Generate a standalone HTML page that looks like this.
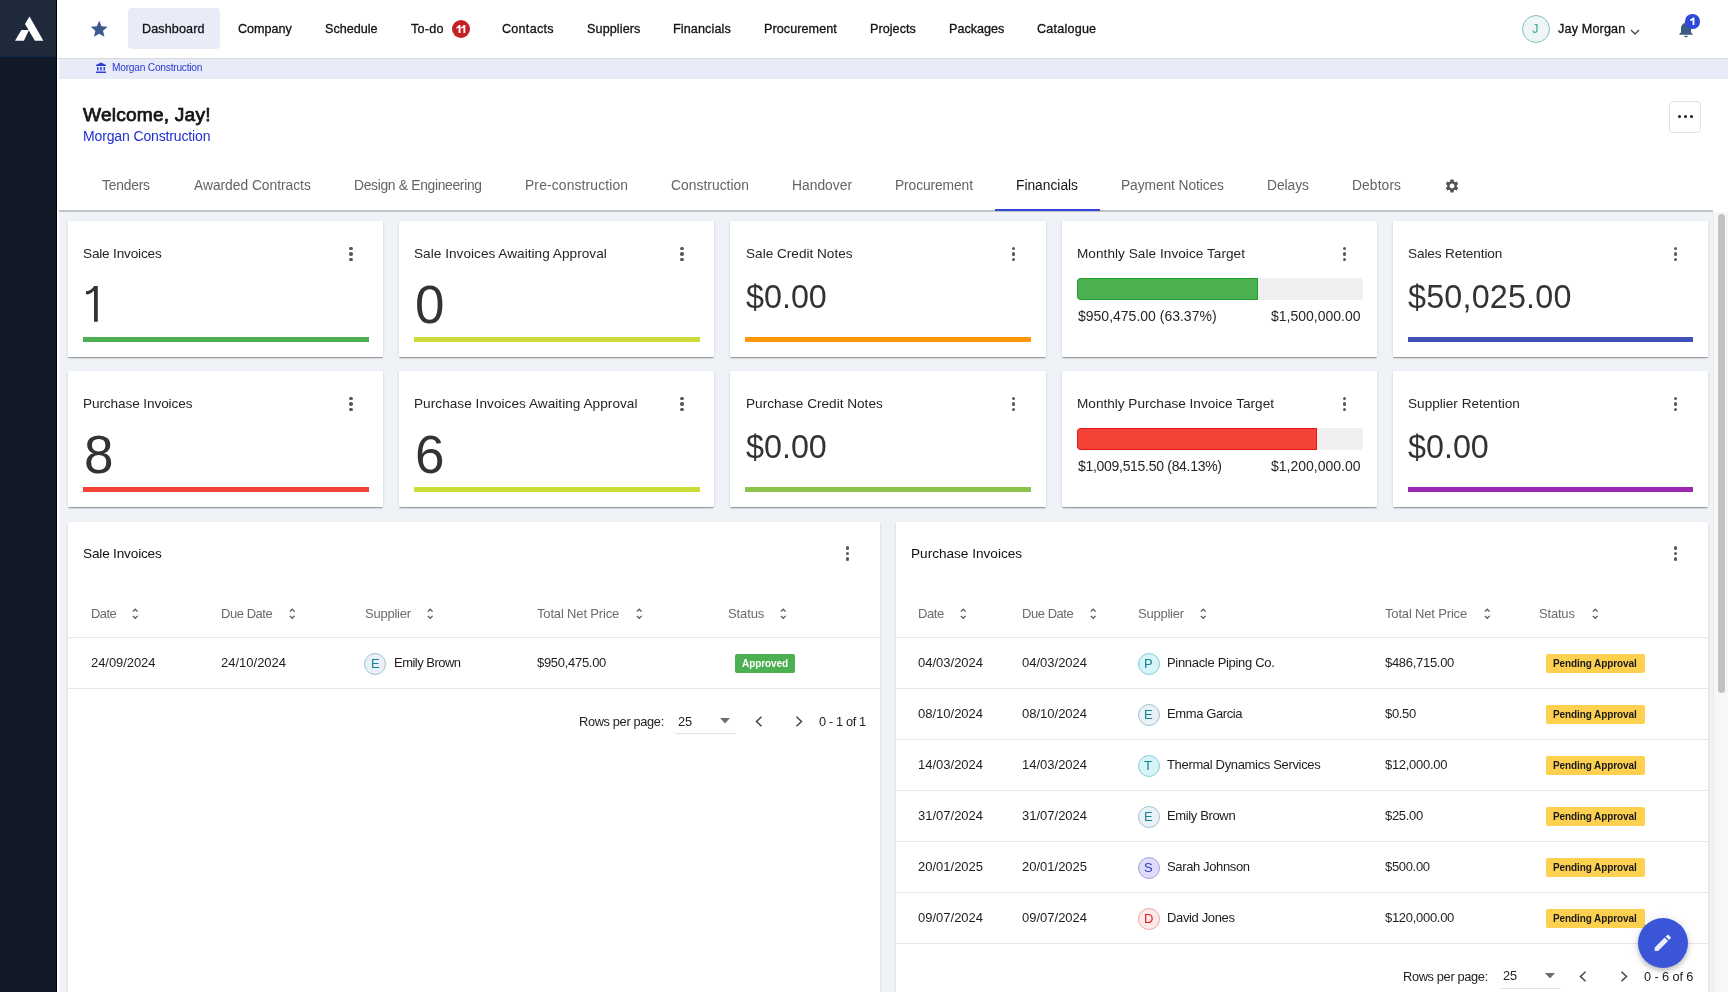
<!DOCTYPE html>
<html><head><meta charset="utf-8"><title>Dashboard</title>
<style>
html,body{margin:0;padding:0;}
.t{position:absolute;white-space:pre;will-change:transform;}
body{width:1728px;height:992px;overflow:hidden;position:relative;font-family:"Liberation Sans", sans-serif;background:#fff;}
</style></head><body>
<div style="position:absolute;left:57px;top:0px;width:1671px;height:992px;background:#ffffff;"></div>
<div style="position:absolute;left:59px;top:212px;width:1654px;height:780px;background:#eff2f6;"></div>
<div style="position:absolute;left:1713px;top:212px;width:15px;height:780px;background:#f7f7f7;border-left:1px solid #e8e8e8;box-sizing:border-box;"></div>
<div style="position:absolute;left:1717.5px;top:213.5px;width:7.5px;height:479.5px;background:#c1c1c1;border-radius:4px;"></div>
<div style="position:absolute;left:0px;top:0px;width:56px;height:992px;background:#111827;"></div>
<div style="position:absolute;left:0px;top:0px;width:56px;height:57px;background:#1f2a3b;"></div>
<div style="position:absolute;left:0px;top:56px;width:56px;height:1px;background:#0f2747;"></div>
<div style="position:absolute;left:56px;top:0px;width:1px;height:992px;background:#000000;"></div>
<svg style="position:absolute;left:0;top:0" width="56" height="57"><polygon fill="#fff" points="29.5,16.6 43.4,40.8 34.9,40.8 25.0,23.9"/><polygon fill="#fff" points="21.4,30.1 29.0,30.1 23.9,40.8 15.0,40.8"/></svg>
<div style="position:absolute;left:128px;top:8px;width:92px;height:41px;background:#e8ecf8;border-radius:4px;"></div>
<svg style="position:absolute;left:89.3px;top:18.8px" width="20.4" height="20.4" viewBox="0 0 24 24"><path fill="#3a5a8c" d="M12 17.27L18.18 21l-1.64-7.03L22 9.24l-7.19-.61L12 2 9.19 8.63 2 9.24l5.46 4.73L5.82 21z"/></svg>
<div style="position:absolute;left:451.5px;top:19.8px;width:18px;height:18px;border-radius:50%;background:#c62026"></div>
<svg style="position:absolute;left:451.5px;top:19.8px" width="18" height="18"><path fill="#fff" d="M6.6 5.0h1.9v8H6.6zM4.4 6.9C5.6 6.7 6.3 6.1 6.8 5.0L7.3 5.9 6.6 7.6C6.1 8.1 5.4 8.5 4.4 8.6zM11.4 5.0h1.9v8h-1.9zM9.2 6.9C10.4 6.7 11.1 6.1 11.6 5.0L12.1 5.9 11.4 7.6C10.9 8.1 10.2 8.5 9.2 8.6z"/></svg>
<div style="position:absolute;left:1522px;top:14.5px;width:28px;height:28px;border-radius:50%;background:#eef5f7;border:1px solid #7fc0c2;box-sizing:border-box"></div>
<svg style="position:absolute;left:1629.5px;top:28.5px" width="10" height="6" viewBox="0 0 10 6"><polyline points="1,1 5,5 9,1" fill="none" stroke="#3b4a63" stroke-width="1.3"/></svg>
<svg style="position:absolute;left:1676px;top:19px" width="20" height="20" viewBox="0 0 24 24"><path fill="#3d5a80" d="M12 22c1.1 0 2-.9 2-2h-4c0 1.1.89 2 2 2zm6-6v-5c0-3.07-1.64-5.64-4.5-6.32V4c0-.83-.67-1.5-1.5-1.5s-1.5.67-1.5 1.5v.68C7.63 5.36 6 7.92 6 11v5l-2 2v1h16v-1l-2-2z"/></svg>
<div style="position:absolute;left:1685.3px;top:14.2px;width:14.5px;height:14.5px;border-radius:50%;background:#2f49d8"></div>
<svg style="position:absolute;left:1685.3px;top:14.2px" width="14.5" height="14.5"><path fill="#fff" d="M7.6 3.4h1.8v7.6H7.6zM5.2 5.2C6.4 5.0 7.2 4.4 7.7 3.4L8.3 4.2 7.6 5.9C7 6.4 6.2 6.8 5.2 6.9z"/></svg>
<div style="position:absolute;left:59px;top:59px;width:1669px;height:20px;background:#e8ecf8;"></div>
<div style="position:absolute;left:57px;top:57.5px;width:1671px;height:1.5px;background:#d3d7de;"></div>
<svg style="position:absolute;left:95px;top:61.5px" width="12" height="12" viewBox="0 0 24 24"><path fill="#2b3fd8" d="M4 10h3v7H4zM10.5 10h3v7h-3zM2 19h20v3H2zM17 10h3v7h-3zM12 1 2 6v2h20V6z"/></svg>
<div style="position:absolute;left:1668.5px;top:101px;width:32px;height:32px;border:1px solid #dfe2e7;border-radius:4px;box-sizing:border-box;background:#fff"></div>
<div style="position:absolute;left:1677.9px;top:114.60000000000001px;width:3.2px;height:3.2px;border-radius:50%;background:#1b1b1f"></div>
<div style="position:absolute;left:1683.7px;top:114.60000000000001px;width:3.2px;height:3.2px;border-radius:50%;background:#1b1b1f"></div>
<div style="position:absolute;left:1689.5px;top:114.60000000000001px;width:3.2px;height:3.2px;border-radius:50%;background:#1b1b1f"></div>
<svg style="position:absolute;left:1444px;top:178.3px" width="16" height="16" viewBox="0 0 24 24"><path fill="#555" d="M19.14 12.94c.04-.3.06-.61.06-.94 0-.32-.02-.64-.07-.94l2.03-1.58c.18-.14.23-.41.12-.61l-1.92-3.32c-.12-.22-.37-.29-.59-.22l-2.39.96c-.5-.38-1.03-.7-1.62-.94l-.36-2.54c-.04-.24-.24-.41-.48-.41h-3.84c-.24 0-.43.17-.47.41l-.36 2.54c-.59.24-1.13.57-1.62.94l-2.39-.96c-.22-.08-.47 0-.59.22L2.74 8.87c-.12.21-.08.47.12.61l2.03 1.58c-.05.3-.09.63-.09.94s.02.64.07.94l-2.03 1.58c-.18.14-.23.41-.12.61l1.92 3.32c.12.22.37.29.59.22l2.39-.96c.5.38 1.03.7 1.62.94l.36 2.54c.05.24.24.41.48.41h3.84c.24 0 .44-.17.47-.41l.36-2.54c.59-.24 1.13-.56 1.62-.94l2.39.96c.22.08.47 0 .59-.22l1.92-3.32c.12-.22.07-.47-.12-.61l-2.01-1.58zM12 15.6c-1.98 0-3.6-1.62-3.6-3.6s1.62-3.6 3.6-3.6 3.6 1.62 3.6 3.6-1.62 3.6-3.6 3.6z"/></svg>
<div style="position:absolute;left:59px;top:210px;width:1654px;height:2px;background:#c0c3c7;"></div>
<div style="position:absolute;left:994.5px;top:209px;width:105.5px;height:2px;background:#3346d6;"></div>
<div style="position:absolute;left:68.0px;top:221px;width:315.2px;height:135.5px;background:#fff;border-radius:1px;box-shadow:0px 2px 1px -1px rgba(0,0,0,0.2),0px 1px 1px 0px rgba(0,0,0,0.14),0px 1px 3px 0px rgba(0,0,0,0.12)"></div>
<div style="position:absolute;left:349.09999999999997px;top:246.7px;width:3.6px;height:3.6px;border-radius:50%;background:#585858"></div>
<div style="position:absolute;left:349.09999999999997px;top:252.1px;width:3.6px;height:3.6px;border-radius:50%;background:#585858"></div>
<div style="position:absolute;left:349.09999999999997px;top:257.55px;width:3.6px;height:3.6px;border-radius:50%;background:#585858"></div>
<svg style="position:absolute;left:68.0px;top:221px" width="40" height="110"><path fill="#333" d="M26 65h3.8v35.8H26zM18 70.2C22 69.8 24.5 68 26 65L27.5 66.5 26 69.6C24.3 72 21.5 73.5 18 73.5z"/></svg>
<div style="position:absolute;left:83.0px;top:337px;width:285.5px;height:5px;background:#4caf50;"></div>
<div style="position:absolute;left:399.2px;top:221px;width:315.2px;height:135.5px;background:#fff;border-radius:1px;box-shadow:0px 2px 1px -1px rgba(0,0,0,0.2),0px 1px 1px 0px rgba(0,0,0,0.14),0px 1px 3px 0px rgba(0,0,0,0.12)"></div>
<div style="position:absolute;left:680.3px;top:246.7px;width:3.6px;height:3.6px;border-radius:50%;background:#585858"></div>
<div style="position:absolute;left:680.3px;top:252.1px;width:3.6px;height:3.6px;border-radius:50%;background:#585858"></div>
<div style="position:absolute;left:680.3px;top:257.55px;width:3.6px;height:3.6px;border-radius:50%;background:#585858"></div>
<div style="position:absolute;left:414.2px;top:337px;width:285.5px;height:5px;background:#cddc39;"></div>
<div style="position:absolute;left:730.4px;top:221px;width:315.2px;height:135.5px;background:#fff;border-radius:1px;box-shadow:0px 2px 1px -1px rgba(0,0,0,0.2),0px 1px 1px 0px rgba(0,0,0,0.14),0px 1px 3px 0px rgba(0,0,0,0.12)"></div>
<div style="position:absolute;left:1011.5px;top:246.7px;width:3.6px;height:3.6px;border-radius:50%;background:#585858"></div>
<div style="position:absolute;left:1011.5px;top:252.1px;width:3.6px;height:3.6px;border-radius:50%;background:#585858"></div>
<div style="position:absolute;left:1011.5px;top:257.55px;width:3.6px;height:3.6px;border-radius:50%;background:#585858"></div>
<div style="position:absolute;left:745.4px;top:337px;width:285.5px;height:5px;background:#ff9800;"></div>
<div style="position:absolute;left:1061.6px;top:221px;width:315.2px;height:135.5px;background:#fff;border-radius:1px;box-shadow:0px 2px 1px -1px rgba(0,0,0,0.2),0px 1px 1px 0px rgba(0,0,0,0.14),0px 1px 3px 0px rgba(0,0,0,0.12)"></div>
<div style="position:absolute;left:1342.7px;top:246.7px;width:3.6px;height:3.6px;border-radius:50%;background:#585858"></div>
<div style="position:absolute;left:1342.7px;top:252.1px;width:3.6px;height:3.6px;border-radius:50%;background:#585858"></div>
<div style="position:absolute;left:1342.7px;top:257.55px;width:3.6px;height:3.6px;border-radius:50%;background:#585858"></div>
<div style="position:absolute;left:1077.1px;top:278px;width:285.5px;height:22.4px;background:#f0f0f0;border-radius:4px;overflow:hidden"><div style="width:180.92135000000002px;height:22.4px;background:#4caf50;box-shadow:inset 0 0 0 1px #20a030;border-radius:4px 0 0 4px"></div></div>
<div style="position:absolute;left:1392.8px;top:221px;width:315.2px;height:135.5px;background:#fff;border-radius:1px;box-shadow:0px 2px 1px -1px rgba(0,0,0,0.2),0px 1px 1px 0px rgba(0,0,0,0.14),0px 1px 3px 0px rgba(0,0,0,0.12)"></div>
<div style="position:absolute;left:1673.8999999999999px;top:246.7px;width:3.6px;height:3.6px;border-radius:50%;background:#585858"></div>
<div style="position:absolute;left:1673.8999999999999px;top:252.1px;width:3.6px;height:3.6px;border-radius:50%;background:#585858"></div>
<div style="position:absolute;left:1673.8999999999999px;top:257.55px;width:3.6px;height:3.6px;border-radius:50%;background:#585858"></div>
<div style="position:absolute;left:1407.8px;top:337px;width:285.5px;height:5px;background:#3f51b5;"></div>
<div style="position:absolute;left:68.0px;top:371px;width:315.2px;height:135.5px;background:#fff;border-radius:1px;box-shadow:0px 2px 1px -1px rgba(0,0,0,0.2),0px 1px 1px 0px rgba(0,0,0,0.14),0px 1px 3px 0px rgba(0,0,0,0.12)"></div>
<div style="position:absolute;left:349.09999999999997px;top:396.7px;width:3.6px;height:3.6px;border-radius:50%;background:#585858"></div>
<div style="position:absolute;left:349.09999999999997px;top:402.09999999999997px;width:3.6px;height:3.6px;border-radius:50%;background:#585858"></div>
<div style="position:absolute;left:349.09999999999997px;top:407.55px;width:3.6px;height:3.6px;border-radius:50%;background:#585858"></div>
<div style="position:absolute;left:83.0px;top:487px;width:285.5px;height:5px;background:#f44336;"></div>
<div style="position:absolute;left:399.2px;top:371px;width:315.2px;height:135.5px;background:#fff;border-radius:1px;box-shadow:0px 2px 1px -1px rgba(0,0,0,0.2),0px 1px 1px 0px rgba(0,0,0,0.14),0px 1px 3px 0px rgba(0,0,0,0.12)"></div>
<div style="position:absolute;left:680.3px;top:396.7px;width:3.6px;height:3.6px;border-radius:50%;background:#585858"></div>
<div style="position:absolute;left:680.3px;top:402.09999999999997px;width:3.6px;height:3.6px;border-radius:50%;background:#585858"></div>
<div style="position:absolute;left:680.3px;top:407.55px;width:3.6px;height:3.6px;border-radius:50%;background:#585858"></div>
<div style="position:absolute;left:414.2px;top:487px;width:285.5px;height:5px;background:#cddc39;"></div>
<div style="position:absolute;left:730.4px;top:371px;width:315.2px;height:135.5px;background:#fff;border-radius:1px;box-shadow:0px 2px 1px -1px rgba(0,0,0,0.2),0px 1px 1px 0px rgba(0,0,0,0.14),0px 1px 3px 0px rgba(0,0,0,0.12)"></div>
<div style="position:absolute;left:1011.5px;top:396.7px;width:3.6px;height:3.6px;border-radius:50%;background:#585858"></div>
<div style="position:absolute;left:1011.5px;top:402.09999999999997px;width:3.6px;height:3.6px;border-radius:50%;background:#585858"></div>
<div style="position:absolute;left:1011.5px;top:407.55px;width:3.6px;height:3.6px;border-radius:50%;background:#585858"></div>
<div style="position:absolute;left:745.4px;top:487px;width:285.5px;height:5px;background:#8bc34a;"></div>
<div style="position:absolute;left:1061.6px;top:371px;width:315.2px;height:135.5px;background:#fff;border-radius:1px;box-shadow:0px 2px 1px -1px rgba(0,0,0,0.2),0px 1px 1px 0px rgba(0,0,0,0.14),0px 1px 3px 0px rgba(0,0,0,0.12)"></div>
<div style="position:absolute;left:1342.7px;top:396.7px;width:3.6px;height:3.6px;border-radius:50%;background:#585858"></div>
<div style="position:absolute;left:1342.7px;top:402.09999999999997px;width:3.6px;height:3.6px;border-radius:50%;background:#585858"></div>
<div style="position:absolute;left:1342.7px;top:407.55px;width:3.6px;height:3.6px;border-radius:50%;background:#585858"></div>
<div style="position:absolute;left:1077.1px;top:428px;width:285.5px;height:22.4px;background:#f0f0f0;border-radius:4px;overflow:hidden"><div style="width:240.19115000000002px;height:22.4px;background:#f44336;box-shadow:inset 0 0 0 1px #e8141c;border-radius:4px 0 0 4px"></div></div>
<div style="position:absolute;left:1392.8px;top:371px;width:315.2px;height:135.5px;background:#fff;border-radius:1px;box-shadow:0px 2px 1px -1px rgba(0,0,0,0.2),0px 1px 1px 0px rgba(0,0,0,0.14),0px 1px 3px 0px rgba(0,0,0,0.12)"></div>
<div style="position:absolute;left:1673.8999999999999px;top:396.7px;width:3.6px;height:3.6px;border-radius:50%;background:#585858"></div>
<div style="position:absolute;left:1673.8999999999999px;top:402.09999999999997px;width:3.6px;height:3.6px;border-radius:50%;background:#585858"></div>
<div style="position:absolute;left:1673.8999999999999px;top:407.55px;width:3.6px;height:3.6px;border-radius:50%;background:#585858"></div>
<div style="position:absolute;left:1407.8px;top:487px;width:285.5px;height:5px;background:#9c27b0;"></div>
<div style="position:absolute;left:68px;top:522px;width:812px;height:480px;background:#fff;border-radius:1px;box-shadow:0px 2px 1px -1px rgba(0,0,0,0.2),0px 1px 1px 0px rgba(0,0,0,0.14),0px 1px 3px 0px rgba(0,0,0,0.12)"></div>
<div style="position:absolute;left:896px;top:522px;width:812px;height:480px;background:#fff;border-radius:1px;box-shadow:0px 2px 1px -1px rgba(0,0,0,0.2),0px 1px 1px 0px rgba(0,0,0,0.14),0px 1px 3px 0px rgba(0,0,0,0.12)"></div>
<div style="position:absolute;left:845.7px;top:546.2px;width:3.6px;height:3.6px;border-radius:50%;background:#585858"></div>
<div style="position:absolute;left:845.7px;top:551.6px;width:3.6px;height:3.6px;border-radius:50%;background:#585858"></div>
<div style="position:absolute;left:845.7px;top:557.0500000000001px;width:3.6px;height:3.6px;border-radius:50%;background:#585858"></div>
<div style="position:absolute;left:1673.5px;top:546.2px;width:3.6px;height:3.6px;border-radius:50%;background:#585858"></div>
<div style="position:absolute;left:1673.5px;top:551.6px;width:3.6px;height:3.6px;border-radius:50%;background:#585858"></div>
<div style="position:absolute;left:1673.5px;top:557.0500000000001px;width:3.6px;height:3.6px;border-radius:50%;background:#585858"></div>
<svg style="position:absolute;left:132.3px;top:608.3px" width="7" height="11.5" viewBox="0 0 7 11.5"><polyline points="0.8,3.6 3.2,1.2 5.6,3.6" fill="none" stroke="#5a5a5a" stroke-width="1.3"/><polyline points="0.8,7.9 3.2,10.3 5.6,7.9" fill="none" stroke="#5a5a5a" stroke-width="1.3"/></svg>
<svg style="position:absolute;left:289.0px;top:608.3px" width="7" height="11.5" viewBox="0 0 7 11.5"><polyline points="0.8,3.6 3.2,1.2 5.6,3.6" fill="none" stroke="#5a5a5a" stroke-width="1.3"/><polyline points="0.8,7.9 3.2,10.3 5.6,7.9" fill="none" stroke="#5a5a5a" stroke-width="1.3"/></svg>
<svg style="position:absolute;left:426.5px;top:608.3px" width="7" height="11.5" viewBox="0 0 7 11.5"><polyline points="0.8,3.6 3.2,1.2 5.6,3.6" fill="none" stroke="#5a5a5a" stroke-width="1.3"/><polyline points="0.8,7.9 3.2,10.3 5.6,7.9" fill="none" stroke="#5a5a5a" stroke-width="1.3"/></svg>
<svg style="position:absolute;left:635.5px;top:608.3px" width="7" height="11.5" viewBox="0 0 7 11.5"><polyline points="0.8,3.6 3.2,1.2 5.6,3.6" fill="none" stroke="#5a5a5a" stroke-width="1.3"/><polyline points="0.8,7.9 3.2,10.3 5.6,7.9" fill="none" stroke="#5a5a5a" stroke-width="1.3"/></svg>
<svg style="position:absolute;left:779.8px;top:608.3px" width="7" height="11.5" viewBox="0 0 7 11.5"><polyline points="0.8,3.6 3.2,1.2 5.6,3.6" fill="none" stroke="#5a5a5a" stroke-width="1.3"/><polyline points="0.8,7.9 3.2,10.3 5.6,7.9" fill="none" stroke="#5a5a5a" stroke-width="1.3"/></svg>
<svg style="position:absolute;left:960.3px;top:608.3px" width="7" height="11.5" viewBox="0 0 7 11.5"><polyline points="0.8,3.6 3.2,1.2 5.6,3.6" fill="none" stroke="#5a5a5a" stroke-width="1.3"/><polyline points="0.8,7.9 3.2,10.3 5.6,7.9" fill="none" stroke="#5a5a5a" stroke-width="1.3"/></svg>
<svg style="position:absolute;left:1090.0px;top:608.3px" width="7" height="11.5" viewBox="0 0 7 11.5"><polyline points="0.8,3.6 3.2,1.2 5.6,3.6" fill="none" stroke="#5a5a5a" stroke-width="1.3"/><polyline points="0.8,7.9 3.2,10.3 5.6,7.9" fill="none" stroke="#5a5a5a" stroke-width="1.3"/></svg>
<svg style="position:absolute;left:1200.0px;top:608.3px" width="7" height="11.5" viewBox="0 0 7 11.5"><polyline points="0.8,3.6 3.2,1.2 5.6,3.6" fill="none" stroke="#5a5a5a" stroke-width="1.3"/><polyline points="0.8,7.9 3.2,10.3 5.6,7.9" fill="none" stroke="#5a5a5a" stroke-width="1.3"/></svg>
<svg style="position:absolute;left:1484.0px;top:608.3px" width="7" height="11.5" viewBox="0 0 7 11.5"><polyline points="0.8,3.6 3.2,1.2 5.6,3.6" fill="none" stroke="#5a5a5a" stroke-width="1.3"/><polyline points="0.8,7.9 3.2,10.3 5.6,7.9" fill="none" stroke="#5a5a5a" stroke-width="1.3"/></svg>
<svg style="position:absolute;left:1591.7px;top:608.3px" width="7" height="11.5" viewBox="0 0 7 11.5"><polyline points="0.8,3.6 3.2,1.2 5.6,3.6" fill="none" stroke="#5a5a5a" stroke-width="1.3"/><polyline points="0.8,7.9 3.2,10.3 5.6,7.9" fill="none" stroke="#5a5a5a" stroke-width="1.3"/></svg>
<div style="position:absolute;left:68px;top:637px;width:812px;height:1px;background:#e6e6e6;"></div>
<div style="position:absolute;left:896px;top:637px;width:812px;height:1px;background:#e6e6e6;"></div>
<div style="position:absolute;left:364.3px;top:652.5px;width:22px;height:22px;border-radius:50%;background:#eaf1f6;border:1px solid #9cc5d2;box-sizing:border-box"></div>
<div style="position:absolute;left:735px;top:654.0px;width:60px;height:19px;background:#4caf50;border-radius:2px"></div>
<div style="position:absolute;left:68px;top:688px;width:812px;height:1px;background:#e6e6e6;"></div>
<div style="position:absolute;left:1137.8px;top:652.5px;width:22px;height:22px;border-radius:50%;background:#d6f3f7;border:1px solid #88cfd8;box-sizing:border-box"></div>
<div style="position:absolute;left:1546px;top:654.2px;width:98.7px;height:18.6px;background:#fdd14f;border-radius:2px"></div>
<div style="position:absolute;left:896px;top:688px;width:812px;height:1px;background:#e6e6e6;"></div>
<div style="position:absolute;left:1137.8px;top:703.5px;width:22px;height:22px;border-radius:50%;background:#eaf1f6;border:1px solid #9cc5d2;box-sizing:border-box"></div>
<div style="position:absolute;left:1546px;top:705.2px;width:98.7px;height:18.6px;background:#fdd14f;border-radius:2px"></div>
<div style="position:absolute;left:896px;top:739px;width:812px;height:1px;background:#e6e6e6;"></div>
<div style="position:absolute;left:1137.8px;top:754.5px;width:22px;height:22px;border-radius:50%;background:#d6f3f7;border:1px solid #88cfd8;box-sizing:border-box"></div>
<div style="position:absolute;left:1546px;top:756.2px;width:98.7px;height:18.6px;background:#fdd14f;border-radius:2px"></div>
<div style="position:absolute;left:896px;top:790px;width:812px;height:1px;background:#e6e6e6;"></div>
<div style="position:absolute;left:1137.8px;top:805.5px;width:22px;height:22px;border-radius:50%;background:#eaf1f6;border:1px solid #9cc5d2;box-sizing:border-box"></div>
<div style="position:absolute;left:1546px;top:807.2px;width:98.7px;height:18.6px;background:#fdd14f;border-radius:2px"></div>
<div style="position:absolute;left:896px;top:841px;width:812px;height:1px;background:#e6e6e6;"></div>
<div style="position:absolute;left:1137.8px;top:856.5px;width:22px;height:22px;border-radius:50%;background:#dedcf8;border:1px solid #a5a2e4;box-sizing:border-box"></div>
<div style="position:absolute;left:1546px;top:858.2px;width:98.7px;height:18.6px;background:#fdd14f;border-radius:2px"></div>
<div style="position:absolute;left:896px;top:892px;width:812px;height:1px;background:#e6e6e6;"></div>
<div style="position:absolute;left:1137.8px;top:907.5px;width:22px;height:22px;border-radius:50%;background:#fbeaea;border:1px solid #f2a4a4;box-sizing:border-box"></div>
<div style="position:absolute;left:1546px;top:909.2px;width:98.7px;height:18.6px;background:#fdd14f;border-radius:2px"></div>
<div style="position:absolute;left:896px;top:943px;width:812px;height:1px;background:#e6e6e6;"></div>
<svg style="position:absolute;left:720.2px;top:718px" width="10" height="5.5" viewBox="0 0 10 5.5"><polygon points="0,0 10,0 5,5.5" fill="#6d6d6d"/></svg>
<div style="position:absolute;left:675.2px;top:733px;width:60.7px;height:1px;background:#e3e3e3;"></div>
<svg style="position:absolute;left:754.5px;top:716px" width="8" height="11" viewBox="0 0 8 11"><polyline points="6.5,0.8 1.5,5.5 6.5,10.2" fill="none" stroke="#444" stroke-width="1.5"/></svg>
<svg style="position:absolute;left:795.2px;top:716px" width="8" height="11" viewBox="0 0 8 11"><polyline points="1.5,0.8 6.5,5.5 1.5,10.2" fill="none" stroke="#444" stroke-width="1.5"/></svg>
<svg style="position:absolute;left:1545px;top:972.5px" width="10" height="5.5" viewBox="0 0 10 5.5"><polygon points="0,0 10,0 5,5.5" fill="#6d6d6d"/></svg>
<div style="position:absolute;left:1500.2px;top:987.5px;width:60.4px;height:1px;background:#e3e3e3;"></div>
<svg style="position:absolute;left:1579px;top:970.5px" width="8" height="11" viewBox="0 0 8 11"><polyline points="6.5,0.8 1.5,5.5 6.5,10.2" fill="none" stroke="#444" stroke-width="1.5"/></svg>
<svg style="position:absolute;left:1620.2px;top:970.5px" width="8" height="11" viewBox="0 0 8 11"><polyline points="1.5,0.8 6.5,5.5 1.5,10.2" fill="none" stroke="#444" stroke-width="1.5"/></svg>
<div class="t" style="left:142.30px;top:23.23px;font-size:12.6px;line-height:12.6px;font-weight:400;color:#121214;letter-spacing:0.109px;-webkit-text-stroke:0.3px #121214;">Dashboard</div>
<div class="t" style="left:238.10px;top:23.23px;font-size:12.6px;line-height:12.6px;font-weight:400;color:#121214;letter-spacing:-0.018px;-webkit-text-stroke:0.3px #121214;">Company</div>
<div class="t" style="left:325.20px;top:23.23px;font-size:12.6px;line-height:12.6px;font-weight:400;color:#121214;letter-spacing:-0.002px;-webkit-text-stroke:0.3px #121214;">Schedule</div>
<div class="t" style="left:411.00px;top:23.23px;font-size:12.6px;line-height:12.6px;font-weight:400;color:#121214;letter-spacing:0.246px;-webkit-text-stroke:0.3px #121214;">To-do</div>
<div class="t" style="left:502.20px;top:23.23px;font-size:12.6px;line-height:12.6px;font-weight:400;color:#121214;letter-spacing:0.257px;-webkit-text-stroke:0.3px #121214;">Contacts</div>
<div class="t" style="left:586.60px;top:23.23px;font-size:12.6px;line-height:12.6px;font-weight:400;color:#121214;letter-spacing:0.111px;-webkit-text-stroke:0.3px #121214;">Suppliers</div>
<div class="t" style="left:673.20px;top:23.23px;font-size:12.6px;line-height:12.6px;font-weight:400;color:#121214;letter-spacing:0.122px;-webkit-text-stroke:0.3px #121214;">Financials</div>
<div class="t" style="left:764.10px;top:23.23px;font-size:12.6px;line-height:12.6px;font-weight:400;color:#121214;letter-spacing:0.069px;-webkit-text-stroke:0.3px #121214;">Procurement</div>
<div class="t" style="left:869.90px;top:23.23px;font-size:12.6px;line-height:12.6px;font-weight:400;color:#121214;letter-spacing:0.057px;-webkit-text-stroke:0.3px #121214;">Projects</div>
<div class="t" style="left:949.00px;top:23.23px;font-size:12.6px;line-height:12.6px;font-weight:400;color:#121214;letter-spacing:-0.002px;-webkit-text-stroke:0.3px #121214;">Packages</div>
<div class="t" style="left:1037.10px;top:23.23px;font-size:12.6px;line-height:12.6px;font-weight:400;color:#121214;letter-spacing:0.210px;-webkit-text-stroke:0.3px #121214;">Catalogue</div>
<div class="t" style="left:1532.20px;top:22.20px;font-size:13px;line-height:13px;font-weight:400;color:#3aa88a;letter-spacing:0.000px;">J</div>
<div class="t" style="left:1557.90px;top:22.73px;font-size:12.6px;line-height:12.6px;font-weight:400;color:#121214;letter-spacing:0.165px;-webkit-text-stroke:0.3px #121214;">Jay Morgan</div>
<div class="t" style="left:111.70px;top:63.37px;font-size:10.2px;line-height:10.2px;font-weight:400;color:#2a3bcf;letter-spacing:-0.227px;">Morgan Construction</div>
<div class="t" style="left:83.30px;top:105.05px;font-size:19.2px;line-height:19.2px;font-weight:400;color:#141414;letter-spacing:0.169px;-webkit-text-stroke:0.75px #141414;">Welcome, Jay!</div>
<div class="t" style="left:83.30px;top:129.45px;font-size:14px;line-height:14px;font-weight:400;color:#1f2fcf;letter-spacing:-0.136px;">Morgan Construction</div>
<div class="t" style="left:101.50px;top:178.62px;font-size:13.8px;line-height:13.8px;font-weight:400;color:#646464;letter-spacing:-0.182px;">Tenders</div>
<div class="t" style="left:193.50px;top:178.62px;font-size:13.8px;line-height:13.8px;font-weight:400;color:#646464;letter-spacing:-0.017px;">Awarded Contracts</div>
<div class="t" style="left:354.00px;top:178.62px;font-size:13.8px;line-height:13.8px;font-weight:400;color:#646464;letter-spacing:-0.288px;">Design &amp; Engineering</div>
<div class="t" style="left:525.00px;top:178.62px;font-size:13.8px;line-height:13.8px;font-weight:400;color:#646464;letter-spacing:0.170px;">Pre-construction</div>
<div class="t" style="left:671.00px;top:178.62px;font-size:13.8px;line-height:13.8px;font-weight:400;color:#646464;letter-spacing:0.050px;">Construction</div>
<div class="t" style="left:792.00px;top:178.62px;font-size:13.8px;line-height:13.8px;font-weight:400;color:#646464;letter-spacing:0.025px;">Handover</div>
<div class="t" style="left:895.00px;top:178.62px;font-size:13.8px;line-height:13.8px;font-weight:400;color:#646464;letter-spacing:-0.098px;">Procurement</div>
<div class="t" style="left:1016.00px;top:178.62px;font-size:13.8px;line-height:13.8px;font-weight:400;color:#161616;letter-spacing:-0.014px;">Financials</div>
<div class="t" style="left:1121.00px;top:178.62px;font-size:13.8px;line-height:13.8px;font-weight:400;color:#646464;letter-spacing:-0.093px;">Payment Notices</div>
<div class="t" style="left:1267.00px;top:178.62px;font-size:13.8px;line-height:13.8px;font-weight:400;color:#646464;letter-spacing:-0.037px;">Delays</div>
<div class="t" style="left:1352.00px;top:178.62px;font-size:13.8px;line-height:13.8px;font-weight:400;color:#646464;letter-spacing:0.115px;">Debtors</div>
<div class="t" style="left:83.20px;top:247.29px;font-size:13.6px;line-height:13.6px;font-weight:400;color:#262626;letter-spacing:-0.176px;">Sale Invoices</div>
<div class="t" style="left:414.40px;top:247.29px;font-size:13.6px;line-height:13.6px;font-weight:400;color:#262626;letter-spacing:0.035px;">Sale Invoices Awaiting Approval</div>
<div class="t" style="left:414.70px;top:277.64px;font-size:53px;line-height:53px;font-weight:400;color:#333333;letter-spacing:0.000px;">0</div>
<div class="t" style="left:745.60px;top:247.29px;font-size:13.6px;line-height:13.6px;font-weight:400;color:#262626;letter-spacing:0.000px;">Sale Credit Notes</div>
<div class="t" style="left:745.90px;top:281.46px;font-size:32.3px;line-height:32.3px;font-weight:400;color:#333333;letter-spacing:0.000px;">$0.00</div>
<div class="t" style="left:1076.80px;top:247.29px;font-size:13.6px;line-height:13.6px;font-weight:400;color:#262626;letter-spacing:0.048px;">Monthly Sale Invoice Target</div>
<div class="t" style="left:1077.60px;top:308.55px;font-size:14px;line-height:14px;font-weight:400;color:#262626;letter-spacing:0.000px;">$950,475.00 (63.37%)</div>
<div class="t" style="left:1271.10px;top:308.55px;font-size:14px;line-height:14px;font-weight:400;color:#262626;letter-spacing:0.000px;">$1,500,000.00</div>
<div class="t" style="left:1408.00px;top:247.29px;font-size:13.6px;line-height:13.6px;font-weight:400;color:#262626;letter-spacing:-0.120px;">Sales Retention</div>
<div class="t" style="left:1408.30px;top:281.46px;font-size:32.3px;line-height:32.3px;font-weight:400;color:#333333;letter-spacing:0.194px;">$50,025.00</div>
<div class="t" style="left:83.20px;top:397.29px;font-size:13.6px;line-height:13.6px;font-weight:400;color:#262626;letter-spacing:-0.099px;">Purchase Invoices</div>
<div class="t" style="left:83.50px;top:427.64px;font-size:53px;line-height:53px;font-weight:400;color:#333333;letter-spacing:0.000px;">8</div>
<div class="t" style="left:414.40px;top:397.29px;font-size:13.6px;line-height:13.6px;font-weight:400;color:#262626;letter-spacing:0.046px;">Purchase Invoices Awaiting Approval</div>
<div class="t" style="left:414.70px;top:427.64px;font-size:53px;line-height:53px;font-weight:400;color:#333333;letter-spacing:0.000px;">6</div>
<div class="t" style="left:745.60px;top:397.29px;font-size:13.6px;line-height:13.6px;font-weight:400;color:#262626;letter-spacing:0.000px;">Purchase Credit Notes</div>
<div class="t" style="left:745.90px;top:431.46px;font-size:32.3px;line-height:32.3px;font-weight:400;color:#333333;letter-spacing:0.000px;">$0.00</div>
<div class="t" style="left:1076.80px;top:397.29px;font-size:13.6px;line-height:13.6px;font-weight:400;color:#262626;letter-spacing:0.000px;">Monthly Purchase Invoice Target</div>
<div class="t" style="left:1077.60px;top:458.55px;font-size:14px;line-height:14px;font-weight:400;color:#262626;letter-spacing:-0.297px;">$1,009,515.50 (84.13%)</div>
<div class="t" style="left:1271.10px;top:458.55px;font-size:14px;line-height:14px;font-weight:400;color:#262626;letter-spacing:0.000px;">$1,200,000.00</div>
<div class="t" style="left:1408.00px;top:397.29px;font-size:13.6px;line-height:13.6px;font-weight:400;color:#262626;letter-spacing:0.000px;">Supplier Retention</div>
<div class="t" style="left:1408.30px;top:431.46px;font-size:32.3px;line-height:32.3px;font-weight:400;color:#333333;letter-spacing:0.000px;">$0.00</div>
<div class="t" style="left:83.20px;top:547.29px;font-size:13.6px;line-height:13.6px;font-weight:400;color:#111;letter-spacing:-0.172px;">Sale Invoices</div>
<div class="t" style="left:911.00px;top:547.29px;font-size:13.6px;line-height:13.6px;font-weight:400;color:#111;letter-spacing:0.000px;">Purchase Invoices</div>
<div class="t" style="left:90.50px;top:607.30px;font-size:13px;line-height:13px;font-weight:400;color:#6b6b6b;letter-spacing:-0.573px;">Date</div>
<div class="t" style="left:221.30px;top:607.30px;font-size:13px;line-height:13px;font-weight:400;color:#6b6b6b;letter-spacing:-0.453px;">Due Date</div>
<div class="t" style="left:364.50px;top:607.30px;font-size:13px;line-height:13px;font-weight:400;color:#6b6b6b;letter-spacing:-0.243px;">Supplier</div>
<div class="t" style="left:537.00px;top:607.30px;font-size:13px;line-height:13px;font-weight:400;color:#6b6b6b;letter-spacing:-0.164px;">Total Net Price</div>
<div class="t" style="left:728.00px;top:607.30px;font-size:13px;line-height:13px;font-weight:400;color:#6b6b6b;letter-spacing:-0.122px;">Status</div>
<div class="t" style="left:918.00px;top:607.30px;font-size:13px;line-height:13px;font-weight:400;color:#6b6b6b;letter-spacing:-0.406px;">Date</div>
<div class="t" style="left:1022.30px;top:607.30px;font-size:13px;line-height:13px;font-weight:400;color:#6b6b6b;letter-spacing:-0.453px;">Due Date</div>
<div class="t" style="left:1138.00px;top:607.30px;font-size:13px;line-height:13px;font-weight:400;color:#6b6b6b;letter-spacing:-0.243px;">Supplier</div>
<div class="t" style="left:1385.40px;top:607.30px;font-size:13px;line-height:13px;font-weight:400;color:#6b6b6b;letter-spacing:-0.168px;">Total Net Price</div>
<div class="t" style="left:1539.30px;top:607.30px;font-size:13px;line-height:13px;font-weight:400;color:#6b6b6b;letter-spacing:-0.192px;">Status</div>
<div class="t" style="left:90.50px;top:656.20px;font-size:13px;line-height:13px;font-weight:400;color:#1e1e1e;letter-spacing:-0.064px;">24/09/2024</div>
<div class="t" style="left:221.30px;top:656.20px;font-size:13px;line-height:13px;font-weight:400;color:#1e1e1e;letter-spacing:0.000px;">24/10/2024</div>
<div class="t" style="left:370.90px;top:657.00px;font-size:13px;line-height:13px;font-weight:400;color:#16839a;letter-spacing:0.000px;">E</div>
<div class="t" style="left:394.30px;top:656.20px;font-size:13px;line-height:13px;font-weight:400;color:#1e1e1e;letter-spacing:-0.525px;">Emily Brown</div>
<div class="t" style="left:537.00px;top:656.20px;font-size:13px;line-height:13px;font-weight:400;color:#1e1e1e;letter-spacing:-0.300px;">$950,475.00</div>
<div class="t" style="left:742.00px;top:658.63px;font-size:10px;line-height:10px;font-weight:700;color:#fff;letter-spacing:-0.096px;">Approved</div>
<div class="t" style="left:918.00px;top:656.20px;font-size:13px;line-height:13px;font-weight:400;color:#1e1e1e;letter-spacing:0.000px;">04/03/2024</div>
<div class="t" style="left:1022.30px;top:656.20px;font-size:13px;line-height:13px;font-weight:400;color:#1e1e1e;letter-spacing:0.000px;">04/03/2024</div>
<div class="t" style="left:1144.40px;top:657.00px;font-size:13px;line-height:13px;font-weight:400;color:#17808e;letter-spacing:0.000px;">P</div>
<div class="t" style="left:1167.30px;top:656.20px;font-size:13px;line-height:13px;font-weight:400;color:#1e1e1e;letter-spacing:-0.315px;">Pinnacle Piping Co.</div>
<div class="t" style="left:1385.40px;top:656.20px;font-size:13px;line-height:13px;font-weight:400;color:#1e1e1e;letter-spacing:-0.300px;">$486,715.00</div>
<div class="t" style="left:1553.45px;top:658.63px;font-size:10px;line-height:10px;font-weight:700;color:#1a1a1a;letter-spacing:-0.094px;">Pending Approval</div>
<div class="t" style="left:918.00px;top:707.20px;font-size:13px;line-height:13px;font-weight:400;color:#1e1e1e;letter-spacing:0.000px;">08/10/2024</div>
<div class="t" style="left:1022.30px;top:707.20px;font-size:13px;line-height:13px;font-weight:400;color:#1e1e1e;letter-spacing:0.000px;">08/10/2024</div>
<div class="t" style="left:1144.40px;top:708.00px;font-size:13px;line-height:13px;font-weight:400;color:#16839a;letter-spacing:0.000px;">E</div>
<div class="t" style="left:1167.30px;top:707.20px;font-size:13px;line-height:13px;font-weight:400;color:#1e1e1e;letter-spacing:-0.397px;">Emma Garcia</div>
<div class="t" style="left:1385.40px;top:707.20px;font-size:13px;line-height:13px;font-weight:400;color:#1e1e1e;letter-spacing:-0.338px;">$0.50</div>
<div class="t" style="left:1553.45px;top:709.63px;font-size:10px;line-height:10px;font-weight:700;color:#1a1a1a;letter-spacing:-0.094px;">Pending Approval</div>
<div class="t" style="left:918.00px;top:758.20px;font-size:13px;line-height:13px;font-weight:400;color:#1e1e1e;letter-spacing:0.000px;">14/03/2024</div>
<div class="t" style="left:1022.30px;top:758.20px;font-size:13px;line-height:13px;font-weight:400;color:#1e1e1e;letter-spacing:0.000px;">14/03/2024</div>
<div class="t" style="left:1144.40px;top:759.00px;font-size:13px;line-height:13px;font-weight:400;color:#17808e;letter-spacing:0.000px;">T</div>
<div class="t" style="left:1167.30px;top:758.20px;font-size:13px;line-height:13px;font-weight:400;color:#1e1e1e;letter-spacing:-0.337px;">Thermal Dynamics Services</div>
<div class="t" style="left:1385.40px;top:758.20px;font-size:13px;line-height:13px;font-weight:400;color:#1e1e1e;letter-spacing:-0.300px;">$12,000.00</div>
<div class="t" style="left:1553.45px;top:760.63px;font-size:10px;line-height:10px;font-weight:700;color:#1a1a1a;letter-spacing:-0.094px;">Pending Approval</div>
<div class="t" style="left:918.00px;top:809.20px;font-size:13px;line-height:13px;font-weight:400;color:#1e1e1e;letter-spacing:0.000px;">31/07/2024</div>
<div class="t" style="left:1022.30px;top:809.20px;font-size:13px;line-height:13px;font-weight:400;color:#1e1e1e;letter-spacing:0.000px;">31/07/2024</div>
<div class="t" style="left:1144.40px;top:810.00px;font-size:13px;line-height:13px;font-weight:400;color:#16839a;letter-spacing:0.000px;">E</div>
<div class="t" style="left:1167.30px;top:809.20px;font-size:13px;line-height:13px;font-weight:400;color:#1e1e1e;letter-spacing:-0.361px;">Emily Brown</div>
<div class="t" style="left:1385.40px;top:809.20px;font-size:13px;line-height:13px;font-weight:400;color:#1e1e1e;letter-spacing:-0.330px;">$25.00</div>
<div class="t" style="left:1553.45px;top:811.63px;font-size:10px;line-height:10px;font-weight:700;color:#1a1a1a;letter-spacing:-0.094px;">Pending Approval</div>
<div class="t" style="left:918.00px;top:860.20px;font-size:13px;line-height:13px;font-weight:400;color:#1e1e1e;letter-spacing:0.000px;">20/01/2025</div>
<div class="t" style="left:1022.30px;top:860.20px;font-size:13px;line-height:13px;font-weight:400;color:#1e1e1e;letter-spacing:0.000px;">20/01/2025</div>
<div class="t" style="left:1144.40px;top:861.00px;font-size:13px;line-height:13px;font-weight:400;color:#2f3bc4;letter-spacing:0.000px;">S</div>
<div class="t" style="left:1167.30px;top:860.20px;font-size:13px;line-height:13px;font-weight:400;color:#1e1e1e;letter-spacing:-0.364px;">Sarah Johnson</div>
<div class="t" style="left:1385.40px;top:860.20px;font-size:13px;line-height:13px;font-weight:400;color:#1e1e1e;letter-spacing:-0.325px;">$500.00</div>
<div class="t" style="left:1553.45px;top:862.63px;font-size:10px;line-height:10px;font-weight:700;color:#1a1a1a;letter-spacing:-0.094px;">Pending Approval</div>
<div class="t" style="left:918.00px;top:911.20px;font-size:13px;line-height:13px;font-weight:400;color:#1e1e1e;letter-spacing:0.000px;">09/07/2024</div>
<div class="t" style="left:1022.30px;top:911.20px;font-size:13px;line-height:13px;font-weight:400;color:#1e1e1e;letter-spacing:0.000px;">09/07/2024</div>
<div class="t" style="left:1144.40px;top:912.00px;font-size:13px;line-height:13px;font-weight:400;color:#e01b1b;letter-spacing:0.000px;">D</div>
<div class="t" style="left:1167.30px;top:911.20px;font-size:13px;line-height:13px;font-weight:400;color:#1e1e1e;letter-spacing:-0.358px;">David Jones</div>
<div class="t" style="left:1385.40px;top:911.20px;font-size:13px;line-height:13px;font-weight:400;color:#1e1e1e;letter-spacing:-0.300px;">$120,000.00</div>
<div class="t" style="left:1553.45px;top:913.63px;font-size:10px;line-height:10px;font-weight:700;color:#1a1a1a;letter-spacing:-0.094px;">Pending Approval</div>
<div class="t" style="left:578.50px;top:716.36px;font-size:12.8px;line-height:12.8px;font-weight:400;color:#222;letter-spacing:-0.342px;">Rows per page:</div>
<div class="t" style="left:677.70px;top:715.86px;font-size:12.8px;line-height:12.8px;font-weight:400;color:#222;letter-spacing:0.000px;">25</div>
<div class="t" style="left:819.30px;top:716.36px;font-size:12.8px;line-height:12.8px;font-weight:400;color:#222;letter-spacing:-0.368px;">0 - 1 of 1</div>
<div class="t" style="left:1403.20px;top:970.96px;font-size:12.8px;line-height:12.8px;font-weight:400;color:#222;letter-spacing:-0.342px;">Rows per page:</div>
<div class="t" style="left:1502.70px;top:970.46px;font-size:12.8px;line-height:12.8px;font-weight:400;color:#222;letter-spacing:0.000px;">25</div>
<div class="t" style="left:1644.20px;top:970.96px;font-size:12.8px;line-height:12.8px;font-weight:400;color:#222;letter-spacing:-0.113px;">0 - 6 of 6</div>
<div style="position:absolute;left:1638px;top:917.5px;width:50px;height:50px;border-radius:50%;background:#3b55d9;box-shadow:0 3px 5px rgba(0,0,0,0.2),0 1px 10px rgba(0,0,0,0.12)"></div>
<svg style="position:absolute;left:1652px;top:932.3px" width="21.6" height="21.6" viewBox="0 0 24 24"><path fill="#eceef8" d="M3 17.25V21h3.75L17.81 9.94l-3.75-3.75L3 17.25zM20.71 7.04c.39-.39.39-1.02 0-1.41l-2.34-2.34c-.39-.39-1.02-.39-1.41 0l-1.83 1.83 3.75 3.75 1.83-1.83z"/></svg>
</body></html>
